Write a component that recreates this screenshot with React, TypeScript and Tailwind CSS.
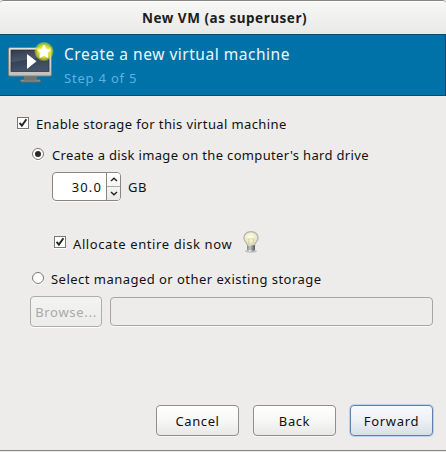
import type { ReactNode } from "react";

function Check() {
  return (
    <span className="block h-[12px] w-[12px] border border-[#777877] bg-white shadow-[0_1px_0_#fff]">
      <svg viewBox="0 0 10 10" className="block h-[10px] w-[10px]">
        <path d="M1.6 4.8 L3.9 7.6 L8.4 1.2" fill="none" stroke="#202425" strokeWidth="1.9" />
      </svg>
    </span>
  );
}

function Radio({ on = false }: { on?: boolean }) {
  return (
    <span className="flex h-[12px] w-[12px] items-center justify-center rounded-full border border-[#777877] bg-white shadow-[0_1px_0_#fff]">
      {on && <span className="h-[6px] w-[6px] rounded-full bg-[#252a2d]" />}
    </span>
  );
}

function Monitor() {
  return (
    <svg width="48" height="48" viewBox="0 0 48 48" className="block">
      <defs>
        <linearGradient id="screen" x1="0" y1="0" x2="0.3" y2="1">
          <stop offset="0" stopColor="#303b4c" />
          <stop offset="0.5" stopColor="#4a566b" />
          <stop offset="0.55" stopColor="#364256" />
          <stop offset="1" stopColor="#465269" />
        </linearGradient>
        <linearGradient id="frame" x1="0" y1="0" x2="0" y2="1">
          <stop offset="0" stopColor="#e3e4e2" />
          <stop offset="1" stopColor="#bfc1bf" />
        </linearGradient>
        <radialGradient id="glow">
          <stop offset="0" stopColor="#f6f65a" />
          <stop offset="0.6" stopColor="#e8ec25" stopOpacity="0.9" />
          <stop offset="0.85" stopColor="#d3dc20" stopOpacity="0.6" />
          <stop offset="1" stopColor="#c8d820" stopOpacity="0" />
        </radialGradient>
      </defs>
      <rect x="12.5" y="37.5" width="20" height="2.5" rx="1" fill="#8b8d8b" stroke="#666966" />
      <rect x="16" y="34" width="13" height="4.5" fill="#6f7371" />
      <rect x="0.5" y="5.5" width="43" height="28.5" rx="1.5" fill="url(#frame)" stroke="#7c807e" />
      <rect x="3" y="8" width="38" height="21.5" fill="url(#screen)" stroke="#27303d" strokeWidth="0.7" />
      <path d="M19 12 L28.5 19.2 L19 27 Z" fill="#fff" />
      <circle cx="36" cy="9.5" r="10" fill="url(#glow)" />
      <path d="M36 3 L38.2 7.2 L42.5 7.9 L39.4 11 L40.1 15.5 L36 13.4 L31.9 15.5 L32.6 11 L29.5 7.9 L33.8 7.2 Z" fill="#fff" stroke="#fff" strokeWidth="0.7" strokeLinejoin="round" />
    </svg>
  );
}

function Bulb() {
  return (
    <svg width="16" height="22" viewBox="0 0 16 22" className="block">
      <defs>
        <radialGradient id="bulb" cx="0.45" cy="0.4" r="0.6">
          <stop offset="0" stopColor="#fffff0" />
          <stop offset="0.5" stopColor="#f1f0c8" />
          <stop offset="1" stopColor="#d4d7cf" />
        </radialGradient>
        <linearGradient id="socket">
          <stop offset="0" stopColor="#8a8d88" />
          <stop offset="0.35" stopColor="#f4f4f2" />
          <stop offset="1" stopColor="#4c504a" />
        </linearGradient>
      </defs>
      <ellipse cx="8" cy="20.3" rx="6" ry="1.4" fill="#aaaba7" opacity="0.7" />
      <path d="M8 .7 C3.7 .7 .9 3.5 .9 7 C.9 10.2 4.1 11.5 4.4 14.5 H11.6 C11.9 11.5 15.1 10.2 15.1 7 C15.1 3.5 12.3 .7 8 .7Z" fill="url(#bulb)" stroke="#b2b5ae" strokeWidth="1.2" />
      <path d="M6 14 L5 7.5 L6.7 8.5 L8 7.3 L9.3 8.5 L11 7.5 L10 14" fill="none" stroke="#d4cd8e" strokeWidth="0.8" />
      <path d="M4 14.2 H12 V18.5 L10 20.5 H6 L4 18.5 Z" fill="url(#socket)" />
      <path d="M4 16.2 L12 15.7 M4 18.2 L12 17.7" stroke="#6c6f69" strokeWidth="0.7" />
    </svg>
  );
}

function Button({ children, className }: { children: ReactNode; className: string }) {
  return (
    <button className={"flex justify-center rounded-[4px] border text-[13px] leading-5 " + className}>
      {children}
    </button>
  );
}

const plain =
  "h-[31px] w-[83px] border-[#8f8f8e] bg-linear-to-b from-white via-[#f7f7f6] to-[#e8e8e6] pt-[5px] tracking-[0.6px] shadow-[0_1px_0_#f8f8f8]";

export default function App() {
  return (
    <div className="h-[452px] w-[446px] overflow-hidden bg-[#edeceb] font-['Noto_Sans',sans-serif] text-[13px] leading-5 whitespace-nowrap text-[#111]">
      <div className="flex h-[451px] flex-col rounded-t-[4px] border-t border-b border-t-[#858585] border-b-[#858585]">
        <header className="flex h-[33px] shrink-0 justify-center rounded-t-[4px] border-t border-white bg-linear-to-b from-[#f7f7f5] to-[#e9e9e7] pt-[6px] pl-[3px] text-[13.5px] font-bold text-[#1b1e20]">
          <span className="tracking-[0.52px]">New VM (as superuser)</span>
        </header>

        <section className="flex h-[62px] shrink-0 border border-l-0 border-[#084e72] bg-[#0072a8] pl-2">
          <div className="pt-[7px]">
            <Monitor />
          </div>
          <div className="pt-[8px] pl-2">
            <h1 className="text-[15.5px] leading-[22px] tracking-[0.52px] text-[#eaf8ff]">Create a new virtual machine</h1>
            <p className="pt-[3px] text-[13px] leading-5 tracking-[0.8px] text-[#5bb2e2]">Step 4 of 5</p>
          </div>
        </section>

        <main className="flex flex-col">
          <div className="flex h-[31px] pt-[18px] pl-[17px]">
            <div className="pt-[3px]"><Check /></div>
            <span className="pl-[7px] tracking-[0.38px]">Enable storage for this virtual machine</span>
          </div>
          <div className="flex h-[31px] pt-[18px] pl-[32px]">
            <div className="pt-[3px]"><Radio on /></div>
            <span className="pl-[8px] tracking-[0.33px]">Create a disk image on the computer's hard drive</span>
          </div>
          <div className="flex h-[58px] pt-[14px] pl-[52px]">
            <div className="flex h-[29px] w-[69px] rounded-[4px] border border-[#858685] bg-white shadow-[0_1px_0_#fafafa]">
              <span className="w-[53px] pt-[4px] pr-[4px] text-right tracking-[1.1px]">30.0</span>
              <div className="flex w-[14px] flex-col rounded-r-[3px] border-l border-[#858685] bg-linear-to-b from-white to-[#e9e9e7]">
                <span className="flex h-[14px] items-center justify-center border-b border-[#aaa]">
                  <svg width="8" height="5" viewBox="0 0 8 5"><path d="M1 4 L4 1.2 L7 4" fill="none" stroke="#222" strokeWidth="1.4" /></svg>
                </span>
                <span className="flex h-[13px] items-center justify-center">
                  <svg width="8" height="5" viewBox="0 0 8 5"><path d="M1 1 L4 3.8 L7 1" fill="none" stroke="#222" strokeWidth="1.4" /></svg>
                </span>
              </div>
            </div>
            <span className="pt-[5px] pl-[7px] tracking-[0.6px]">GB</span>
          </div>
          <div className="flex h-[38px] pt-[18px] pl-[54px]">
            <div className="pt-[2px]"><Check /></div>
            <span className="w-[177px] pl-[7px] tracking-[0.6px]">Allocate entire disk now</span>
            <div className="-mt-[3px]"><Bulb /></div>
          </div>
          <div className="flex h-[42px] pt-[15px] pl-[32px]">
            <div className="pt-[3px]"><Radio /></div>
            <span className="pl-[7px] tracking-[0.47px]">Select managed or other existing storage</span>
          </div>
          <div className="flex pl-[30px]">
            <Button className="h-[31px] w-[72px] border-[#adadac] bg-linear-to-b from-[#f3f3f2] to-[#ececeb] pt-[5px] text-[#a9aaa9] tracking-[0.7px] shadow-[0_1px_0_#fff]">Browse...</Button>
            <div className="mt-px ml-2 h-[29px] w-[323px] rounded-[4px] border border-[#a6a6a5] shadow-[0_1px_0_#fafafa]" />
          </div>
        </main>

        <footer className="mt-auto flex justify-end gap-[14px] pr-[13px] pb-[14px]">
          <Button className={plain}>Cancel</Button>
          <Button className={plain}>Back</Button>
          <Button className="h-[31px] w-[83px] border-[#627fa9] bg-linear-to-b from-[#f7f9fc] via-[#edf1f6] to-[#d9dee5] pt-[5px] tracking-[0.7px] shadow-[0_0_0_1px_#bdd0e9]">Forward</Button>
        </footer>
      </div>
    </div>
  );
}
